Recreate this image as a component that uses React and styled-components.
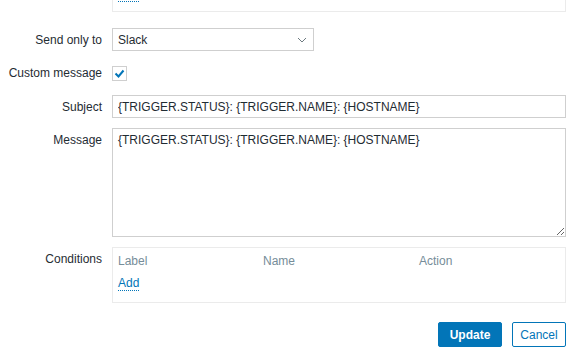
import React from "react";
import styled, { createGlobalStyle } from "styled-components";

const Global = createGlobalStyle`
  html, body { margin: 0; padding: 0; background: #fff; }
  body { font-family: "Liberation Sans", Arial, sans-serif; font-size: 12px; color: #1f2c33; overflow: hidden; }
  * { box-sizing: border-box; }
`;

const Form = styled.div`
  width: 576px;
  height: 354px;
  padding: 0 10px 0 0;
  display: flex;
  flex-direction: column;
`;

const Row = styled.div`
  display: grid;
  grid-template-columns: 102px 1fr;
  column-gap: 10px;
  align-items: ${(p) => (p.$top ? "start" : "center")};
  margin-top: ${(p) => p.$mt ?? 10}px;
`;

const Label = styled.label`
  text-align: right;
  white-space: nowrap;
  line-height: 14px;
  padding-top: ${(p) => p.$pt ?? 0}px;
`;

const Box = styled.div`
  border: 1px solid #ebebeb;
  padding: 5px 5px;
`;

const TopBox = styled(Box)`
  margin-top: -15px;
  height: 27px;
  display: flex;
  align-items: flex-end;
  padding-bottom: 9px;
`;

const Link = styled.a`
  color: #0275b8;
  text-decoration: none;
  border-bottom: 1px dotted #0275b8;
  line-height: 14px;
  cursor: pointer;
`;

const SelectBox = styled.div`
  width: 202px;
  height: 23px;
  border: 1px solid #cfcfcf;
  display: flex;
  align-items: center;
  justify-content: space-between;
  padding: 0 6px 0 5px;
  background: #fff;
`;

const Check = styled.span`
  width: 15px;
  height: 15px;
  border: 1px solid #cfcfcf;
  display: flex;
  align-items: center;
  justify-content: center;
  background: #fff;
`;

const ControlRow = styled.div`
  height: 24px;
  display: flex;
  align-items: center;
`;

const Input = styled.input`
  height: 23px;
  width: 100%;
  border: 1px solid #cfcfcf;
  padding: 0 5px;
  font: inherit;
  color: #1f2c33;
  outline: none;
`;

const TextArea = styled.textarea`
  height: 109px;
  width: 100%;
  border: 1px solid #cfcfcf;
  padding: 4px 5px;
  font: inherit;
  line-height: 14px;
  color: #1f2c33;
  outline: none;
  resize: vertical;
  display: block;
  margin: 0;
`;

const CondBox = styled(Box)`
  height: 56px;
  padding: 6px 5px 0;
`;

const Table = styled.div`
  display: grid;
  grid-template-columns: 145px 156px 1fr;
  row-gap: 8px;
`;

const Th = styled.div`
  color: #768d99;
  line-height: 14px;
`;

const Cell = styled.div`
  grid-column: ${(p) => p.$span || "auto"};
  line-height: 14px;
`;

const Buttons = styled.div`
  display: flex;
  justify-content: flex-end;
  gap: 10px;
  margin-top: 19px;
`;

const Button = styled.button`
  height: 25px;
  width: ${(p) => p.$w}px;
  padding: 0;
  font: inherit;
  font-weight: ${(p) => (p.$primary ? "bold" : "normal")};
  background: ${(p) => (p.$primary ? "#0275b8" : "#fff")};
  color: ${(p) => (p.$primary ? "#fff" : "#0275b8")};
  border: 1px solid #0275b8;
  border-radius: 2px;
`;

export default function App() {
  const text = "{TRIGGER.STATUS}: {TRIGGER.NAME}: {HOSTNAME}";
  return (
    <>
      <Global />
      <Form>
        <Row $mt={0}>
          <span />
          <TopBox>
            <Link>Add</Link>
          </TopBox>
        </Row>
        <Row $mt={16}>
          <Label>Send only to</Label>
          <SelectBox>
            <span>Slack</span>
            <svg width="10" height="6" viewBox="0 0 10 6">
              <path d="M1 1l4 4 4-4" fill="none" stroke="#6d7a80" strokeWidth="1" />
            </svg>
          </SelectBox>
        </Row>
        <Row>
          <Label>Custom message</Label>
          <ControlRow>
            <Check>
              <svg width="11" height="9" viewBox="0 0 11 9">
                <path d="M1.5 4.5l3 3 5-6" fill="none" stroke="#0275b8" strokeWidth="2" />
              </svg>
            </Check>
          </ControlRow>
        </Row>
        <Row>
          <Label>Subject</Label>
          <Input defaultValue={text} />
        </Row>
        <Row $top>
          <Label $pt={5}>Message</Label>
          <TextArea defaultValue={text} />
        </Row>
        <Row $top>
          <Label $pt={5}>Conditions</Label>
          <CondBox>
            <Table>
              <Th>Label</Th>
              <Th>Name</Th>
              <Th>Action</Th>
              <Cell $span="1 / -1">
                <Link>Add</Link>
              </Cell>
            </Table>
          </CondBox>
        </Row>
        <Buttons>
          <Button $primary $w={64}>Update</Button>
          <Button $w={54}>Cancel</Button>
        </Buttons>
      </Form>
    </>
  );
}
